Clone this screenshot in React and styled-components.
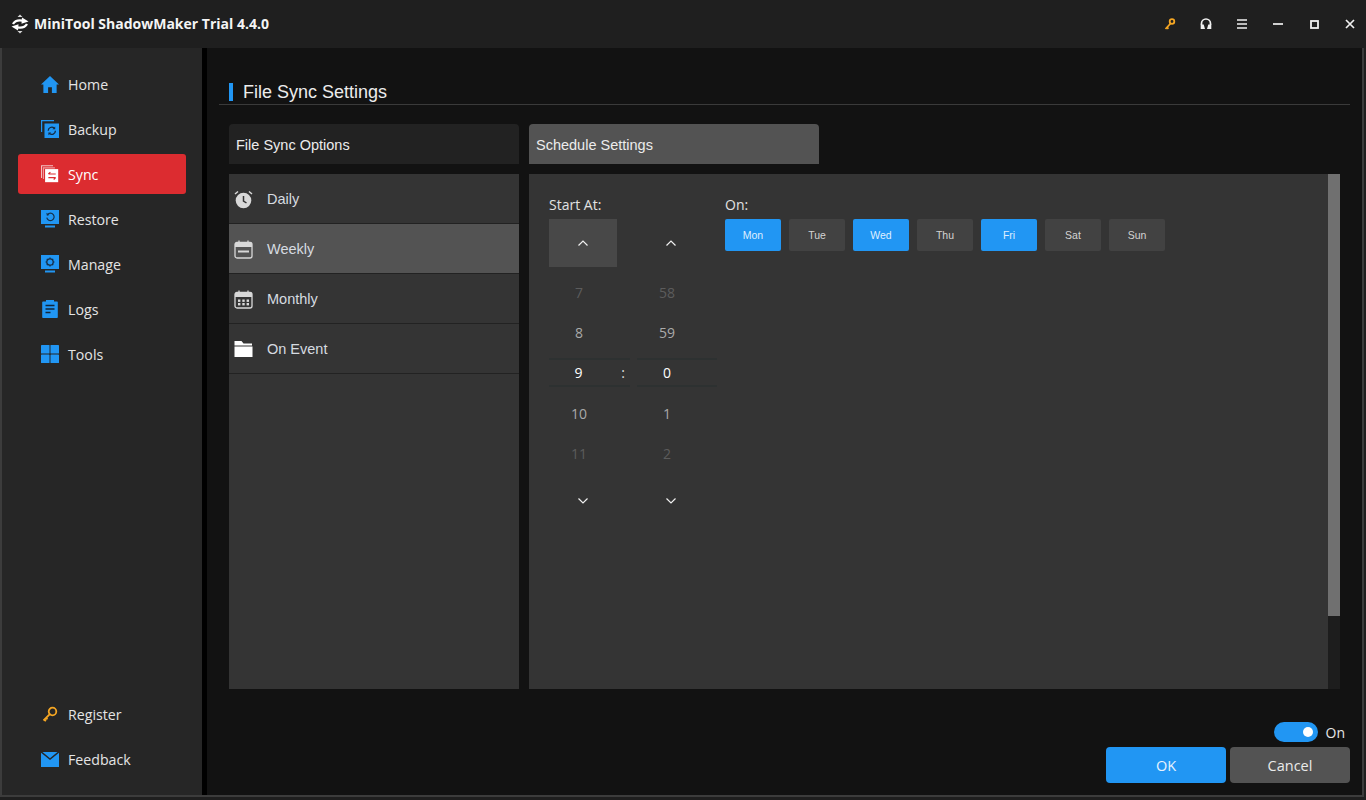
import React from "react";
import styled, { createGlobalStyle } from "styled-components";

const Global = createGlobalStyle`
  html, body { margin: 0; padding: 0; background: #1b1b1b; }
  * { box-sizing: border-box; }
`;

const Win = styled.div`
  width: 1366px; height: 800px; display: flex; flex-direction: column;
  background: #1f1f1f; overflow: hidden; color: #e6e6e6;
  font-family: "Open Sans", "Noto Sans", sans-serif;
`;
const TitleBar = styled.header`
  height: 48px; flex: none; display: flex; align-items: center; background: #1f1f1f;
  padding: 0 0 0 10px;
`;
const AppTitle = styled.h1`
  margin: 0 0 0 4px; font-size: 14px; font-weight: 700; color: #f4f4f4; flex: 1;
  padding-bottom: 1px;
`;
const WinButtons = styled.div`
  display: flex; align-items: center; gap: 18px; padding-right: 7px;
`;
const WinBtn = styled.span`
  width: 18px; height: 18px; display: flex; align-items: center; justify-content: center;
`;
const Body = styled.div`
  flex: 1; min-height: 0; display: flex; border-left: 2px solid #3c3c3c;
  border-right: 2px solid #3c3c3c; border-bottom: 2px solid #3c3c3c; margin: 0 2px 3px 0;
`;
const Sidebar = styled.nav`
  width: 200px; flex: none; background: #262626;
  display: flex; flex-direction: column; justify-content: space-between; padding: 16px 16px 16px;
`;
const NavGroup = styled.div`display: flex; flex-direction: column; gap: 5px;`;
const NavItem = styled.a`
  height: 40px; display: flex; align-items: center; gap: 9px; padding-left: 23px; border-radius: 3px;
  font-size: 14.2px; color: ${p => (p.$active ? "#fff" : "#e4e4e4")};
  background: ${p => (p.$active ? "#dc2c30" : "transparent")};
`;
const IconBox = styled.span`
  width: 18px; height: 20px; display: flex; align-items: center; justify-content: center; flex: none;
`;
const ListIcon = styled(IconBox)`width: 19px;`;
const Gutter = styled.div`width: 5px; flex: none; background: #000;`;
const Main = styled.main`
  flex: 1; min-width: 0; background: #121212; padding: 30px 12px 12px 12px;
  display: flex; flex-direction: column;
`;
const Heading = styled.h2`
  margin: 0; height: 27px; border-bottom: 1px solid #3a3a3a; padding: 2px 0 0 10px;
  display: flex; align-items: center; gap: 10px; font: 400 18px "Liberation Sans", Arial, sans-serif; color: #ececec;
`;
const HeadBar = styled.i`width: 4px; height: 18px; background: #2196f3; display: block;`;
const Content = styled.div`
  margin: 19px 0 0 10px; display: grid; grid-template-columns: 290px 809px 12px;
  grid-template-rows: 40px 515px; row-gap: 10px;
`;
const Tab = styled.div`
  height: 40px; border-radius: 4px 4px 0 0; display: flex; align-items: center; padding: 1px 0 0 7px;
  width: 290px; background: ${p => (p.$active ? "#535353" : "#222222")};
  margin-left: ${p => (p.$active ? "10px" : "0")};
  font: 400 14.5px "Liberation Sans", Arial, sans-serif; color: #ececec;
`;
const ListPanel = styled.div`background: #343434;`;
const ListRow = styled.div`
  height: 50px; display: flex; align-items: center; gap: 14px; padding: 1px 0 0 5px;
  border-bottom: 1px solid #222;
  background: ${p => (p.$active ? "#535353" : "transparent")};
  font: 400 14.5px "Liberation Sans", Arial, sans-serif; color: #d6dbe0;
`;
const SchedulePanel = styled.div`
  margin-left: 10px; background: #343434; padding: 20px; display: flex; gap: 8px;
`;
const Track = styled.div`background: #1d1d1d;`;
const Thumb = styled.div`height: 442px; background: #707070;`;
const Picker = styled.div`width: 168px; flex: none;`;
const Label = styled.div`
  font-size: 14px; height: 25px; line-height: 22px; color: #e2e2e2;
`;
const PickerGrid = styled.div`display: grid; grid-template-columns: 81px 80px; column-gap: 7px;`;
const Arrow = styled.div`
  width: 68px; height: 48px; margin-bottom: 5px; display: flex; align-items: center; justify-content: center;
  background: ${p => (p.$hot ? "#484848" : "transparent")};
`;
const DownArrow = styled(Arrow)`margin: 4px 0 0;`;
const Num = styled.div`
  height: 40px; display: flex; align-items: center; font-size: 14px;
  color: ${p => (p.$level === 0 ? "#fff" : p.$level === 1 ? "#aaa" : "#5c5c5c")};
`;
const NumText = styled.span`width: 60px; text-align: center;`;
const Selected = styled(Num)`
  height: 29px; margin: 6px 0; border-top: 2px solid #2d3131; border-bottom: 2px solid #2d3131;
`;
const Colon = styled.span`width: 14px; margin-left: 8px; text-align: center; color: #ddd;`;
const DaysWrap = styled.div`flex: 1;`;
const Days = styled.div`display: flex; gap: 8px;`;
const Day = styled.div`
  width: 56px; height: 32px; border-radius: 2px; display: flex; align-items: center; justify-content: center;
  padding-bottom: 1px; font: 400 10.5px "Liberation Sans", Arial, sans-serif;
  background: ${p => (p.$on ? "#2196f3" : "#424242")}; color: ${p => (p.$on ? "#dfeeff" : "#d4d4d4")};
`;
const Footer = styled.div`
  margin-top: 33px; display: flex; flex-direction: column; align-items: flex-end;
`;
const SwitchRow = styled.div`
  display: flex; align-items: center; gap: 8px; height: 20px; padding-right: 5px; font-size: 14px; color: #e6e6e6;
`;
const SwitchTrack = styled.div`
  width: 44px; height: 20px; border-radius: 10px; background: #2196f3; display: flex; align-items: center;
  justify-content: flex-end; padding-right: 5px;
`;
const Knob = styled.i`width: 10px; height: 10px; border-radius: 50%; background: #fff; display: block;`;
const Buttons = styled.div`display: flex; gap: 4px; margin-top: 5px;`;
const Button = styled.button`
  width: 120px; height: 36px; border: 0; border-radius: 4px; font-family: inherit; font-size: 14.5px; padding: 0;
  background: ${p => (p.$primary ? "#2196f3" : "#535353")}; color: ${p => (p.$primary ? "#e8f3fe" : "#eaeaea")};
`;

const BLUE = "#2196f3";
const S = ({ w = 18, h = 18, vb = "0 0 18 18", children }) => (
  <svg width={w} height={h} viewBox={vb} style={{ display: "block" }}>{children}</svg>
);
const Logo = () => (
  <S w={20} h={20} vb="0 0 20 20">
    <path d="M10 .5L7.500 3h5zM10 19.500L7.500 17h5z" fill="#d8d8d8" />
    <path d="M3 10C4.500 7.300 8 5.800 12.500 6.600" fill="none" stroke="#fff" strokeWidth="2.300" />
    <path d="M12 3.500l6.500 4-7 2.200z" fill="#fff" />
    <path d="M17 10C15.500 12.700 12 14.200 7.500 13.400" fill="none" stroke="#fff" strokeWidth="2.300" />
    <path d="M8 16.500l-6.500-4 7-2.200z" fill="#fff" />
  </S>
);
const Home = () => (
  <S w={19} h={19} vb="0 0 19 19"><path d="M9.500.5L19 9.500h-2.500V18.500h-5v-6h-4v6h-5V9.500H0z" fill={BLUE} /></S>
);
const Backup = () => (
  <S>
    <path d="M.6 12V.6H13" fill="none" stroke={BLUE} strokeWidth="1.200" />
    <rect x="3.500" y="3.500" width="14.500" height="14.500" fill={BLUE} />
    <path d="M2.500 2.500H15M2.500 2.500V15" stroke="#262626" strokeWidth="1" />
    <path d="M7.200 10.800a3.600 3.600 0 0 1 6-2.700M14.400 10.800a3.600 3.600 0 0 1-6 2.700" fill="none" stroke="#14293f" strokeWidth="1.300" />
    <path d="M14.200 6.400v2.800h-2.800zM7.400 15.200v-2.800h2.800z" fill="#14293f" />
  </S>
);
const Sync = () => (
  <S w={22} h={22} vb="0 0 22 22">
    <path d="M.7 16V1h14" fill="none" stroke="#f3c4c5" strokeWidth="1.300" />
    <path d="M3 17V3.500h14" fill="none" stroke="#ee9a9c" strokeWidth="1.300" />
    <rect x="5" y="5" width="16" height="16" fill="#fff" />
    <path d="M9 11h9M9 11l2.500-2.200M18 15.500H9M18 15.500l-2.500 2.200" stroke="#dc2c30" strokeWidth="1.400" fill="none" />
  </S>
);
const Monitor = ({ children }) => (
  <S>
    <path d="M0 0h18v14H0z" fill={BLUE} />
    <rect x="4" y="15.500" width="10" height="2" fill={BLUE} />
    {children}
  </S>
);
const Restore = () => (
  <Monitor>
    <path d="M6.500 4.600a3.700 3.700 0 1 1-.7 3" fill="none" stroke="#17304a" strokeWidth="1.200" />
    <path d="M5.300 2.800l.6 3 2.700-.8z" fill="#17304a" />
  </Monitor>
);
const Manage = () => (
  <Monitor>
    <circle cx="9" cy="7" r="3.200" fill="none" stroke="#17304a" strokeWidth="1.300" />
    <path d="M9 2.500v1.400M9 10.100v1.400M4.500 7h1.400M12.100 7h1.400M5.800 3.800l1 1M11.200 9.200l1 1M12.200 3.800l-1 1M6.800 9.200l-1 1" stroke="#17304a" strokeWidth="1.200" />
  </Monitor>
);
const Logs = () => (
  <S>
    <path d="M2 1.500h3V0h8v1.500h3a.8.8 0 0 1 .8.8v15a.8.8 0 0 1-.8.7H2a.8.8 0 0 1-.8-.7v-15a.8.8 0 0 1 .8-.8z" fill={BLUE} />
    <path d="M4.500 5.500h9M4.500 9h9M4.500 12.500h5" stroke="#12263a" strokeWidth="1.300" />
  </S>
);
const Tools = () => (
  <S>
    <rect x="0" y="0" width="8.500" height="8.500" rx=".6" fill={BLUE} />
    <rect x="9.500" y="0" width="8.500" height="8.500" rx=".6" fill={BLUE} />
    <rect x="0" y="9.500" width="8.500" height="8.500" rx=".6" fill={BLUE} />
    <rect x="9.500" y="9.500" width="8.500" height="8.500" rx=".6" fill={BLUE} />
  </S>
);
const KeyIcon = ({ size = 16, sw = 1.800 }) => (
  <S w={size} h={size} vb="0 0 16 16">
    <circle cx="10.500" cy="5.500" r="3.800" fill="none" stroke="#f5a623" strokeWidth={sw} />
    <path d="M7.800 8.200L1.500 14.500M2.200 13.800l1.800 1.200M4 12l1.500 1.200" stroke="#f5a623" strokeWidth={sw} fill="none" />
  </S>
);
const Mail = () => (
  <S h={15} vb="0 0 18 15">
    <path d="M0 .8l9 7.200 9-7.200V15H0z" fill={BLUE} />
    <path d="M1.500 0h15L9 6.200z" fill={BLUE} />
  </S>
);
const Alarm = () => (
  <S w={19} h={19} vb="0 0 19 19">
    <circle cx="9.500" cy="10.500" r="7.800" fill="#d8d8d8" />
    <path d="M9.500 6v5l3 2" fill="none" stroke="#343434" strokeWidth="1.500" />
    <path d="M1 4l3-2.500M18 4l-3-2.500" stroke="#d8d8d8" strokeWidth="1.500" />
  </S>
);
const CalBase = ({ children }) => (
  <S w={19} h={19} vb="0 0 19 19">
    <rect x="1" y="2.500" width="17" height="15.500" rx="2" fill="none" stroke="#d8d8d8" strokeWidth="1.300" />
    <path d="M1 3.500a1.500 1.500 0 0 1 1.500-1.200h14A1.500 1.500 0 0 1 18 3.500V7H1z" fill="#d8d8d8" />
    <path d="M5 .500v3M14 .500v3" stroke="#d8d8d8" strokeWidth="1.300" />
    {children}
  </S>
);
const Week = () => (
  <CalBase><rect x="4" y="10.500" width="11" height="2" fill="#d8d8d8" /></CalBase>
);
const Month = () => (
  <CalBase>
    {[4, 8.300, 12.600].map(x => [9.500, 13].map(y => <rect key={x + "-" + y} x={x} y={y} width="2.400" height="2.400" fill="#d8d8d8" />))}
  </CalBase>
);
const Folder = () => (
  <S w={19} h={16} vb="0 0 19 16">
    <path d="M.5 0h7l2 2.500H18V4.500H.5zM.5 5.500h18V16H.5z" fill="#fff" />
  </S>
);
const Chev = ({ down }) => (
  <svg width="10" height="6" viewBox="0 0 10 6" style={{ display: "block" }}>
    <path d={down ? "M.5 .5L5 5 9.500 .5" : "M.5 5.500L5 1 9.500 5.500"} fill="none" stroke="#f0f0f0" strokeWidth="1.200" />
  </svg>
);

const nav = [
  ["Home", Home], ["Backup", Backup], ["Sync", Sync], ["Restore", Restore],
  ["Manage", Manage], ["Logs", Logs], ["Tools", Tools],
];
const rows = [["Daily", Alarm], ["Weekly", Week], ["Monthly", Month], ["On Event", Folder]];
const days = [["Mon", 1], ["Tue"], ["Wed", 1], ["Thu"], ["Fri", 1], ["Sat"], ["Sun"]];

export default function App() {
  return (
    <Win>
      <Global />
      <TitleBar>
        <Logo />
        <AppTitle>MiniTool ShadowMaker Trial 4.4.0</AppTitle>
        <WinButtons>
          <WinBtn>
            <S w={12} h={12} vb="0 0 12 12">
              <circle cx="8" cy="3.500" r="2.300" fill="none" stroke="#f5a623" strokeWidth="1.800" />
              <path d="M6.500 5.500L1.500 11M3 9.500l1.500 1.300" stroke="#f5a623" strokeWidth="1.800" fill="none" />
            </S>
          </WinBtn>
          <WinBtn>
            <S w={12} h={12} vb="0 0 12 12">
              <path d="M1.500 7V5.500a4.500 4.500 0 0 1 9 0V7" fill="none" stroke="#f0f0f0" strokeWidth="1.700" />
              <path d="M.7 6.500h3L5 11H.7zM11.300 6.500h-3L7 11h4.300z" fill="#f0f0f0" />
            </S>
          </WinBtn>
          <WinBtn>
            <S w={10} h={10} vb="0 0 10 10"><path d="M0 1h10M0 5h10M0 9h10" stroke="#f0f0f0" strokeWidth="1.700" /></S>
          </WinBtn>
          <WinBtn>
            <S w={10} h={10} vb="0 0 10 10"><path d="M0 5h10" stroke="#f0f0f0" strokeWidth="1.700" /></S>
          </WinBtn>
          <WinBtn>
            <S w={9} h={9} vb="0 0 9 9"><rect x="1" y="1" width="7" height="7" fill="none" stroke="#f0f0f0" strokeWidth="1.800" /></S>
          </WinBtn>
          <WinBtn>
            <S w={10} h={10} vb="0 0 10 10"><path d="M1 1l8 8M9 1l-8 8" stroke="#f0f0f0" strokeWidth="1.700" /></S>
          </WinBtn>
        </WinButtons>
      </TitleBar>
      <Body>
        <Sidebar>
          <NavGroup>
            {nav.map(([label, I]) => (
              <NavItem key={label} $active={label === "Sync"}>
                <IconBox><I /></IconBox>{label}
              </NavItem>
            ))}
          </NavGroup>
          <NavGroup>
            <NavItem><IconBox><KeyIcon /></IconBox>Register</NavItem>
            <NavItem><IconBox><Mail /></IconBox>Feedback</NavItem>
          </NavGroup>
        </Sidebar>
        <Gutter />
        <Main>
          <Heading><HeadBar />File Sync Settings</Heading>
          <Content>
            <Tab>File Sync Options</Tab>
            <Tab $active>Schedule Settings</Tab>
            <span />
            <ListPanel>
              {rows.map(([label, I], i) => (
                <ListRow key={label} $active={i === 1}>
                  <ListIcon><I /></ListIcon>{label}
                </ListRow>
              ))}
            </ListPanel>
            <SchedulePanel>
              <Picker>
                <Label>Start At:</Label>
                <PickerGrid>
                  <Arrow $hot><Chev /></Arrow>
                  <Arrow><Chev /></Arrow>
                  <Num $level={2}><NumText>7</NumText></Num>
                  <Num $level={2}><NumText>58</NumText></Num>
                  <Num $level={1}><NumText>8</NumText></Num>
                  <Num $level={1}><NumText>59</NumText></Num>
                  <Selected $level={0}><NumText>9</NumText><Colon>:</Colon></Selected>
                  <Selected $level={0}><NumText>0</NumText></Selected>
                  <Num $level={1}><NumText>10</NumText></Num>
                  <Num $level={1}><NumText>1</NumText></Num>
                  <Num $level={2}><NumText>11</NumText></Num>
                  <Num $level={2}><NumText>2</NumText></Num>
                  <DownArrow><Chev down /></DownArrow>
                  <DownArrow><Chev down /></DownArrow>
                </PickerGrid>
              </Picker>
              <DaysWrap>
                <Label>On:</Label>
                <Days>
                  {days.map(([d, on]) => <Day key={d} $on={!!on}>{d}</Day>)}
                </Days>
              </DaysWrap>
            </SchedulePanel>
            <Track><Thumb /></Track>
          </Content>
          <Footer>
            <SwitchRow><SwitchTrack><Knob /></SwitchTrack><span>On</span></SwitchRow>
            <Buttons>
              <Button $primary>OK</Button>
              <Button>Cancel</Button>
            </Buttons>
          </Footer>
        </Main>
      </Body>
    </Win>
  );
}
